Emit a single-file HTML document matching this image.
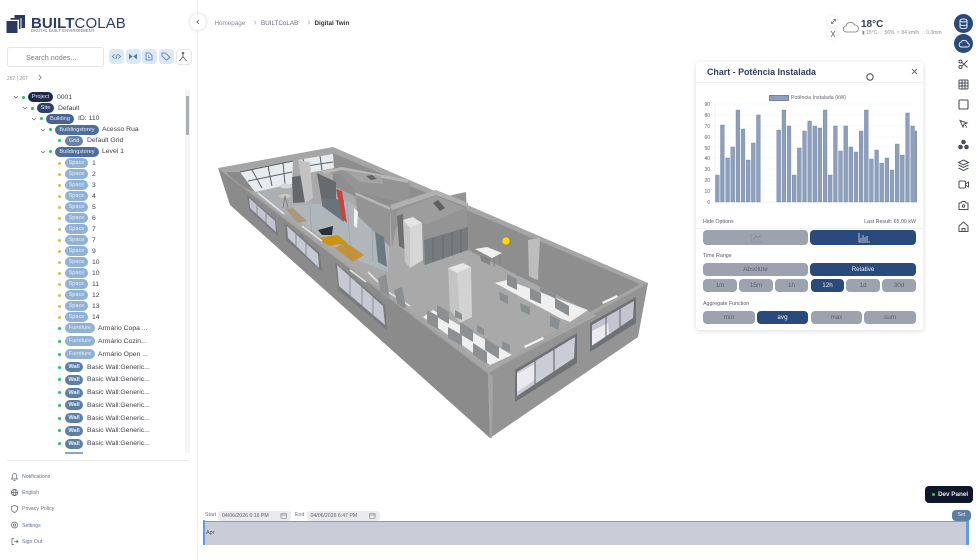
<!DOCTYPE html>
<html><head><meta charset="utf-8"><style>
html,body{margin:0;padding:0;background:#fff}
#p{position:relative;width:980px;height:560px;overflow:hidden;background:#fff;font-family:"Liberation Sans",sans-serif;color:#333;filter:blur(.35px)}
#p div,#p span.a{position:absolute;white-space:nowrap}
.r{height:10px;left:0;width:190px}
.d{width:3px;height:3px;border-radius:50%;left:58px;top:3.5px;background:#22c55e}
.y{background:#eab84a}
.b{height:10px;line-height:10px;border-radius:5px;color:#e8eef6;font-size:5.6px;text-align:center;top:0}
.t{font-size:6.8px;line-height:10px;top:.8px;color:#3c3f45}
.sp{left:65px;width:23px;background:#8fb2d6}
.w{left:65px;width:18px;background:#5c7fa8;font-weight:bold}
.f{left:65px;width:30px;background:#8fb2d6}
.btn{border-radius:4px;background:#9ca3af;color:#5b626e;font-size:6.3px;text-align:center}
.on{background:#2a4a7c;color:#e9eef6}
.lbl{font-size:5.3px;color:#555b66}
.yl{left:698px;width:12px;text-align:right;font-size:5px;color:#666;line-height:6px}
.ft{left:22px;font-size:5.2px;color:#66708a}
</style></head><body><div id="p">

<svg style="position:absolute;left:0;top:0" width="980" height="560" viewBox="0 0 980 560">
<!-- logo -->
<g fill="#2a3a63"><rect x="6.500" y="21" width="11" height="12"/><path d="M10.500 18h10v11h-1.500V19.800h-8.500z"/><path d="M14.500 15H25v13h-3.500V18h-7z"/></g>
<!-- building -->
<polygon points="218,168 488,373 490,438 230,205" fill="#8b8b8b"/>
<polygon points="488,373 648,283 638,337 490,438" fill="#949494"/>
<polygon points="488,373 493,376 492,438 490,438" fill="#a3a3a3"/>
<polygon points="218,168 333,147 648,283 488,373" fill="#a5a5a5"/>
<polygon points="226,172 333,153 640,284 488,368" fill="#a9a9a9"/>
<polygon points="333,153 640,284 590,312 468,250 410,222 333,186" fill="#8e8e8e"/>
<polygon points="226,172 240,172 255,192 240,186" fill="#8a8a8a"/>
<!-- back windows -->
<polygon points="240,172 293,161 292,184 255,192" fill="#e6ebef"/>
<polygon points="298,160 333,154 334,168 303,174" fill="#e6ebef"/>
<g stroke="#5a6064" stroke-width="1" fill="none"><path d="M240,172L293,161M248,181L292,172M252,170L262,188M268,166L272,186M283,163L285,184M303,159L306,173M320,156L322,170M300,167L333,162"/></g>
<polygon points="255,192 292,184 318,208 300,220 280,212" fill="#adb0b2"/>
<!-- column and cabinet -->
<polygon points="292,177 305,175 307,202 293,203" fill="#64686c"/>
<polygon points="298,160 310,162 313,198 305,203" fill="#c2c2c2"/>
<ellipse cx="285" cy="196" rx="6" ry="2" fill="#cbc9bd"/><path d="M285 196l-2 12M285 196l3 12" stroke="#777" stroke-width=".8"/>
<ellipse cx="286" cy="186" rx="6" ry="2.500" fill="#d5d8d8"/>
<!-- small upper room -->
<polygon points="322,171 342,167 409,180 410,204 357,192 342,176" fill="#949494"/>
<polygon points="322,171 342,167 409,180 408,183 342,170 324,174" fill="#b8b8b8"/>
<polygon points="345,170 380,176 384,184 360,182" fill="#a3a3a3"/>
<polygon points="366,176 372,175 377,179 371,180" fill="#606366"/>
<!-- dark panel, glass, red -->
<polygon points="293,207 347,200 390,230 388,272 352,258 300,222" fill="#afb7bb"/>
<polygon points="317,173 336,182 336,210 322,203" fill="#666b70"/>
<polygon points="322,198 344,200 344,222 322,206" fill="#69747a"/>
<polygon points="336,189 342,191 347,223 342,218" fill="#c8453f"/>
<polygon points="355,192 390,207 390,247 358,216" fill="#949494"/>
<polygon points="355,192 390,207 390,210 356,195" fill="#b5b5b5"/>
<polygon points="375,232 384,237 387,267 378,262" fill="#6b7a82"/>
<polygon points="354,208 358,212 357,228 354,226" fill="#f2f4f5"/>
<path d="M310 206L312 240M347 200L350 245M372 226L373 262" stroke="#969ea2" stroke-width=".6" fill="none"/>
<!-- right room boxes -->
<polygon points="390,207 436,190 448,196 466,192 468,250 424,265 410,228 403,220 396,228 392,248" fill="#949494"/>
<polygon points="390,205 436,190 468,203 468,207 436,195 392,210" fill="#b0b0b0"/>
<polygon points="396,212 436,196 465,208 428,224 402,222" fill="#9d9d9d"/>
<polygon points="433,203 438,200 445,208 440,211" fill="#5e6164"/>
<polygon points="397,216 403,214 406,250 399,246" fill="#707070"/>
<polygon points="424,240 468,227 468,250 425,265" fill="#777b7d"/>
<path d="M433 238v24M443 235v24M452 232v24M461 230v23" stroke="#606466" stroke-width=".7"/>
<!-- column 1 -->
<polygon points="403,220 410,228 410,268 405,262" fill="#c6c6c6"/>
<polygon points="410,228 422,223 423,260 410,268" fill="#d6d6d6"/>
<polygon points="403,220 413,217 422,223 410,228" fill="#e4e4e4"/>
<!-- orange tables and chair -->
<polygon points="285,209 293,208 307,221 298,223" fill="#a9987e"/>
<polygon points="318,238 338,235 347,243 328,246" fill="#cc9310"/>
<polygon points="335,248 345,242 364,255 353,262" fill="#c29238"/>
<polygon points="318,230 333,226 332,235 322,235" fill="#2b333a"/>
<polygon points="296,236 302,235 305,244 298,243" fill="#6a7a96"/>
<!-- left side desks -->
<path d="M258,193L284,214M302,226L322,241M350,270L366,282M368,272L378,282M385,290L410,306" stroke="#e4e4e4" stroke-width="1.600"/>
<polygon points="378,278 386,274 390,300 382,298" fill="#8d9193"/>
<polygon points="394,290 402,287 406,308 398,306" fill="#8a8e90"/>
<!-- back desk -->
<polygon points="475,249 487,247 502,253 492,258" fill="#f1f1f1"/>
<polygon points="480,255 490,259 490,265 481,261" fill="#858585"/>
<path d="M494 258v9M500 255v9" stroke="#808080" stroke-width="1"/>
<!-- column 2 / 3 -->
<polygon points="448,268 457,273 460,323 450,310" fill="#c4c4c4"/>
<polygon points="457,273 471,267 472,317 460,323" fill="#d2d2d2"/>
<polygon points="448,268 463,263 471,267 457,273" fill="#e6e6e6"/>
<polygon points="528,240 540,238 538,280 529,278" fill="#bdbdbd"/>
<!-- right desks -->
<polygon points="495,283 507,280 588,310 570,322 560,318" fill="#efefef"/>
<g fill="#8b8e90">
<polygon points="507,274 517,279 517,290 507,285"/><polygon points="530,288 541,293 541,304 530,299"/><polygon points="555,298 569,306 569,316 555,308"/>
<polygon points="516,270 535,279 535,283 516,275"/><polygon points="540,287 556,295 556,299 540,291"/>
<polygon points="499,292 508,296 508,304 500,300"/><polygon points="520,303 530,307 530,315 521,311"/><polygon points="550,315 560,320 558,330 550,326"/>
</g>
<!-- left desks -->
<polygon points="423,317 433,310 512,355 490,365" fill="#efefef"/>
<g fill="#8d9092">
<polygon points="427,310 438,316 438,329 427,323"/><polygon points="437,305 449,312 449,324 437,317"/>
<polygon points="448,327 462,335 462,346 448,338"/><polygon points="460,322 473,330 473,342 460,334"/>
<polygon points="473,343 487,352 487,364 473,355"/><polygon points="485,338 499,347 499,359 485,350"/>
<polygon points="455,310 462,314 462,320 455,317"/><polygon points="477,325 484,329 484,335 477,332"/><polygon points="502,341 510,345 510,352 502,349"/>
</g>
<polygon points="524,346 543,337 544,339 525,348" fill="#f3f3f3"/>
<polygon points="602,302 617,295 618,297 603,304" fill="#f3f3f3"/>
<polygon points="490,368 513,358 528,350 548,338 590,312 596,316 488,372" fill="#a8a8a8"/>
<!-- right face windows -->
<polygon points="515,370 577,333 577,363 515,402" fill="#6e7274"/>
<polygon points="517,372 575,337 574,358 517,396" fill="#ccccd8"/>
<polygon points="517,374 535,364 536,379 517,392" fill="#e9e9ee"/>
<path d="M535 361v23M554 349v23" stroke="#6e7274" stroke-width="1.200"/>
<polygon points="590,323 636,297 636,323 590,352" fill="#6e7274"/>
<polygon points="592,325 634,301 633,318 592,346" fill="#c4c4d0"/>
<polygon points="592,331 608,323 609,334 592,345" fill="#ececf0"/>
<path d="M606 316v21M620 309v20" stroke="#6e7274" stroke-width="1.100"/>
<!-- left face windows -->
<polygon points="247,195 276,220 278,236 249,210" fill="#787b7d"/>
<polygon points="249,198 275,221 276,232 250,208" fill="#c2c4d0"/>
<polygon points="285,223 320,253 322,272 286,240" fill="#787b7d"/>
<polygon points="287,226 318,254 319,268 288,238" fill="#c6c8d4"/>
<polygon points="335,262 385,305 387,330 338,290" fill="#787b7d"/>
<polygon points="337,265 383,306 385,325 339,286" fill="#c6c8d4"/>
<path d="M257 204v14M266 212v14M296 234v16M306 243v16M350 276v22M362 287v22M373 297v22" stroke="#808386" stroke-width=".8"/>
<path d="M218,168L488,373L648,283" fill="none" stroke="#a0a0a0" stroke-width="1"/>
<circle cx="506" cy="241" r="4" fill="#ffd514" stroke="#b78a10" stroke-width=".7"/>
<!-- search -->
<circle cx="15.500" cy="56.500" r="2.400" fill="none" stroke="#9aa0a8" stroke-width=".7"/><path d="M17.300 58.300l1.700 1.700" stroke="#9aa0a8" stroke-width=".7"/>
<!-- tree carets -->
<g fill="none" stroke="#667" stroke-width=".7">
<path d="M14 96l2 2 2-2M23 107l2 2 2-2M32 118l2 2 2-2M41 129l2 2 2-2M41 151l2 2 2-2"/>
<path d="M39 75l2 2.500-2 2.500"/>
</g>
</svg>

<!-- sidebar chrome -->
<div style="left:197px;top:0;width:1px;height:560px;background:#eef0f2"></div>
<div style="left:190px;top:14px;width:16px;height:16px;border-radius:50%;background:#fff;box-shadow:0 0 4px rgba(0,0,0,.18)"></div>
<svg style="position:absolute;left:190px;top:14px" width="16" height="16"><path d="M9 6l-2.200 2 2.200 2" fill="none" stroke="#555" stroke-width=".8"/></svg>

<div style="left:31px;top:15px;font-size:15px;font-weight:bold;line-height:17px;color:#2d3c63;letter-spacing:.1px">BUILT<span style="font-weight:normal">COLAB</span></div>
<div style="left:31px;top:28px;font-size:4.200px;line-height:6px;color:#667;letter-spacing:.12px">DIGITAL BUILT ENVIRONMENT</div>

<div style="left:7px;top:47px;width:95px;height:18px;border:1px solid #e3e5e8;border-radius:3px;background:#fff"></div>
<div style="left:26px;top:52.800px;font-size:7.200px;line-height:9px;color:#777d87">Search nodes...</div>
<div style="left:109px;top:49px;width:15px;height:15px;border-radius:4px;background:#dbe8f8"></div>
<div style="left:126px;top:49px;width:15px;height:15px;border-radius:4px;background:#dbe8f8"></div>
<div style="left:142px;top:49px;width:15px;height:15px;border-radius:4px;background:#dbe8f8"></div>
<div style="left:159px;top:49px;width:15px;height:15px;border-radius:4px;background:#dbe8f8"></div>
<div style="left:176px;top:49px;width:14px;height:14px;border-radius:4px;background:#fff;border:1px solid #e4e6ea"></div>
<svg style="position:absolute;left:109px;top:49px" width="82" height="15" fill="none" stroke="#4f76a8" stroke-width=".8">
<path d="M5.500 5.500L3.500 7.500l2 2M9.500 5.500l2 2-2 2M8.300 5l-1.200 5"/>
<path d="M20.500 5.500v4l2.500-2zM27.500 5.500v4l-2.500-2z" fill="#4f76a8"/>
<path d="M37 4h3.500L43 6.500V11h-6zM39 8.500h2M39 7h1"/>
<path d="M52 5h3.500L60 9.500 56.500 12 52 8z" transform="translate(1 -1)"/>
<path d="M74 4.500v3M74 7.500l-3 4M74 7.500l3 4M71 11.500h-1M77 11.500h1" stroke="#555"/><circle cx="74" cy="4" r=".9" stroke="#555"/>
</svg>
<div style="left:7px;top:75.500px;font-size:5px;line-height:6px;color:#8a8f98">267 | 267</div>

<!-- tree -->
<div class="r" style="top:92px"><div class="d" style="left:22px"></div><div class="b" style="left:28px;width:25px;background:#1f2a4b">Project</div><div class="t" style="left:57px">0001</div></div>
<div class="r" style="top:103px"><div class="d" style="left:31px"></div><div class="b" style="left:37px;width:17px;background:#2c4170">Site</div><div class="t" style="left:58px">Default</div></div>
<div class="r" style="top:113.500px"><div class="d" style="left:40px"></div><div class="b" style="left:46px;width:28px;background:#47648f">Building</div><div class="t" style="left:78px">ID: 110</div></div>
<div class="r" style="top:124.500px"><div class="d" style="left:49px"></div><div class="b" style="left:55px;width:44px;background:#4f6e9b">Buildingstorey</div><div class="t" style="left:102px">Acesso Rua</div></div>
<div class="r" style="top:135.500px"><div class="d"></div><div class="b" style="left:65px;width:18px;background:#6783a8">Grid</div><div class="t" style="left:87px">Default Grid</div></div>
<div class="r" style="top:146.500px"><div class="d" style="left:49px"></div><div class="b" style="left:55px;width:44px;background:#4f6e9b">Buildingstorey</div><div class="t" style="left:102px">Level 1</div></div>
<div class="r" style="top:158px"><div class="d y"></div><div class="b sp">Space</div><div class="t" style="left:92px">1</div></div>
<div class="r" style="top:169px"><div class="d y"></div><div class="b sp">Space</div><div class="t" style="left:92px">2</div></div>
<div class="r" style="top:180px"><div class="d y"></div><div class="b sp">Space</div><div class="t" style="left:92px">3</div></div>
<div class="r" style="top:191px"><div class="d y"></div><div class="b sp">Space</div><div class="t" style="left:92px">4</div></div>
<div class="r" style="top:202px"><div class="d y"></div><div class="b sp">Space</div><div class="t" style="left:92px">5</div></div>
<div class="r" style="top:213px"><div class="d y"></div><div class="b sp">Space</div><div class="t" style="left:92px">6</div></div>
<div class="r" style="top:224px"><div class="d y"></div><div class="b sp">Space</div><div class="t" style="left:92px">7</div></div>
<div class="r" style="top:235px"><div class="d y"></div><div class="b sp">Space</div><div class="t" style="left:92px">7</div></div>
<div class="r" style="top:246px"><div class="d y"></div><div class="b sp">Space</div><div class="t" style="left:92px">9</div></div>
<div class="r" style="top:257px"><div class="d y"></div><div class="b sp">Space</div><div class="t" style="left:92px">10</div></div>
<div class="r" style="top:268px"><div class="d y"></div><div class="b sp">Space</div><div class="t" style="left:92px">10</div></div>
<div class="r" style="top:279px"><div class="d y"></div><div class="b sp">Space</div><div class="t" style="left:92px">11</div></div>
<div class="r" style="top:290px"><div class="d y"></div><div class="b sp">Space</div><div class="t" style="left:92px">12</div></div>
<div class="r" style="top:301px"><div class="d y"></div><div class="b sp">Space</div><div class="t" style="left:92px">13</div></div>
<div class="r" style="top:312px"><div class="d y"></div><div class="b sp">Space</div><div class="t" style="left:92px">14</div></div>
<div class="r" style="top:323px"><div class="d"></div><div class="b f">Furniture</div><div class="t" style="left:98px">Armário Copa ...</div></div>
<div class="r" style="top:336px"><div class="d"></div><div class="b f">Furniture</div><div class="t" style="left:98px">Armário Cozin...</div></div>
<div class="r" style="top:349px"><div class="d"></div><div class="b f">Furniture</div><div class="t" style="left:98px">Armário Open ...</div></div>
<div class="r" style="top:362px"><div class="d"></div><div class="b w">Wall</div><div class="t" style="left:87px">Basic Wall:Generic...</div></div>
<div class="r" style="top:374.500px"><div class="d"></div><div class="b w">Wall</div><div class="t" style="left:87px">Basic Wall:Generic...</div></div>
<div class="r" style="top:387.500px"><div class="d"></div><div class="b w">Wall</div><div class="t" style="left:87px">Basic Wall:Generic...</div></div>
<div class="r" style="top:400px"><div class="d"></div><div class="b w">Wall</div><div class="t" style="left:87px">Basic Wall:Generic...</div></div>
<div class="r" style="top:413px"><div class="d"></div><div class="b w">Wall</div><div class="t" style="left:87px">Basic Wall:Generic...</div></div>
<div class="r" style="top:425.500px"><div class="d"></div><div class="b w">Wall</div><div class="t" style="left:87px">Basic Wall:Generic...</div></div>
<div class="r" style="top:438.500px"><div class="d"></div><div class="b w">Wall</div><div class="t" style="left:87px">Basic Wall:Generic...</div></div>
<div style="left:65px;top:452px;width:18px;height:1.500px;background:#8aa5c5"></div>

<div style="left:185px;top:90px;width:5px;height:363px;background:#f5f5f6"></div>
<div style="left:186px;top:96px;width:3px;height:39px;background:#a9aeb5"></div>

<div style="left:7px;top:460px;width:183px;height:1px;background:#e8e9eb"></div>
<div class="ft" style="top:473.800px;line-height:6px">Notifications</div>
<div class="ft" style="top:489.800px;line-height:6px">English</div>
<div class="ft" style="top:506.300px;line-height:6px">Privacy Policy</div>
<div class="ft" style="top:522.800px;line-height:6px">Settings</div>
<div class="ft" style="top:538.800px;line-height:6px">Sign Out</div>
<svg style="position:absolute;left:9px;top:471px" width="11" height="75" fill="none" stroke="#555e6e" stroke-width=".7">
<path d="M2.500 8c1-1 1-2 1-3.500a2 2 0 0 1 4 0C7.500 6 7.500 7 8.500 8zM4.500 9.500h2"/>
<circle cx="5.500" cy="21.500" r="3.200"/><path d="M2.300 21.500h6.400M5.500 18.300c-2 2-2 4.400 0 6.400 2-2 2-4.400 0-6.400"/>
<path d="M5.500 34.500l3 1v2.500c0 1.700-1.300 2.800-3 3.500-1.700-.7-3-1.800-3-3.500v-2.500z"/>
<circle cx="5.500" cy="54" r="1.200"/><circle cx="5.500" cy="54" r="3"/>
<path d="M5 67.500H3v6h2M5.500 70.500h3.500M7.500 69l1.500 1.500L7.500 72"/>
</svg>

<!-- breadcrumb -->
<div style="left:214.500px;top:19.800px;font-size:6.300px;line-height:8px;color:#858a94">Homepage</div>
<div style="left:261px;top:19.800px;font-size:6.300px;line-height:8px;color:#666b75">BUILTCoLAB</div>
<div style="left:314.500px;top:19.800px;font-size:6.300px;line-height:8px;color:#333;font-weight:bold">Digital Twin</div>
<svg style="position:absolute;left:250px;top:18px" width="70" height="10" fill="none" stroke="#aaa" stroke-width=".6"><path d="M4 2.500l2 2-2 2M58 2.500l2 2-2 2"/></svg>

<!-- weather -->
<div style="left:827px;top:16px;width:11px;height:11px;border-radius:50%;background:#fff;box-shadow:0 0 3px rgba(0,0,0,.12)"></div>
<div style="left:827px;top:28px;width:11px;height:11px;border-radius:50%;background:#fff;box-shadow:0 0 3px rgba(0,0,0,.12)"></div>
<svg style="position:absolute;left:825px;top:14px" width="40" height="26" fill="none" stroke="#666" stroke-width=".7">
<path d="M6.500 9.500l4-4M6.500 7.500v2h2M10.500 7.500v-2h-2"/>
<path d="M6 17l4 6M10 17l-4 6"/>
<path d="M21.500 18a3 3 0 0 1-.5-6 4.500 4.500 0 0 1 8.500-1 3.600 3.600 0 0 1 1.500 7z" stroke="#777" stroke-width=".8"/>
</svg>
<div style="left:861px;top:18.500px;font-size:10px;font-weight:bold;line-height:12px;color:#37405a">18°C</div>
<div style="left:862px;top:29.500px;font-size:5px;line-height:6px;color:#8a919c">▮ 15°C &nbsp;◌ 56% &nbsp;≈ 84 km/h &nbsp;◌ 0.0mm</div>

<!-- right toolbar -->
<div style="left:953.500px;top:13.500px;width:19px;height:19px;border-radius:50%;background:#2a4a7c"></div>
<div style="left:953.500px;top:34px;width:19px;height:19px;border-radius:50%;background:#2a4a7c"></div>
<svg style="position:absolute;left:950px;top:10px" width="28" height="230" fill="none" stroke="#4a4f58" stroke-width="1">
<g stroke="#e6ecf5"><ellipse cx="13.500" cy="10.500" rx="3.500" ry="1.500"/><path d="M10 10.500v6.500c0 2 7 2 7 0v-6.500M10 14c0 2 7 2 7 0"/>
<path d="M11 37h6a2 2 0 0 0 .5-4 3.500 3.500 0 0 0-6.500-.8A2.500 2.500 0 0 0 11 37z"/></g>
<circle cx="10.500" cy="51.500" r="1.500"/><circle cx="10.500" cy="57" r="1.500"/><path d="M12 52.500l5.500 5M12 56l5.500-5.500"/>
<rect x="9" y="70" width="9" height="9" rx="1"/><path d="M9 73h9M9 76h9M12 70v9M15 70v9"/>
<rect x="9" y="90" width="9" height="9" rx="1" stroke-width="1.100"/>
<path d="M10 110.500l7 2.500-3 1-1 3zM15 115l2 2.500"/>
<g fill="#4a4f58" stroke="none"><circle cx="13.500" cy="132" r="2.300"/><circle cx="10.500" cy="137" r="2.300"/><circle cx="16.500" cy="137" r="2.300"/></g>
<path d="M13.500 150l5 2.500-5 2.500-5-2.500zM8.500 155l5 2.500 5-2.500M8.500 158l5 2.500 5-2.500"/>
<rect x="9" y="171" width="6.500" height="7" rx="1"/><path d="M15.500 174l3-2v5l-3-2"/>
<path d="M9 193h2l1-1.500h3l1 1.500h2v6.500H9z"/><circle cx="13.500" cy="196" r="1.200"/>
<path d="M9 216l4.500-4 4.500 4v5.500H9zM12 221.500v-3h3v3"/>
</svg>

<!-- chart panel -->
<div style="left:696px;top:62px;width:227px;height:268px;background:#fff;border-radius:3px;box-shadow:0 1px 6px rgba(0,0,0,.14)"></div>
<div style="left:696px;top:82px;width:227px;height:1px;background:#eef0f2"></div>
<div style="left:707px;top:66px;font-size:8.900px;font-weight:bold;line-height:12px;color:#2f3d5e">Chart - Potência Instalada</div>
<svg style="position:absolute;left:696px;top:62px" width="227" height="268" fill="none">
<path d="M216 7l5 5M221 7l-5 5" stroke="#667" stroke-width=".9"/>
<circle cx="174" cy="15" r="3.200" stroke="#444" stroke-width="1"/>
<path d="M8 42H220M8 53H220M8 64H220M8 75H220M8 85H220M8 96H220M8 107H220M8 118H220M8 129H220" stroke="#f0f1f3" stroke-width=".5"/>
<path d="M19 42v98H220" stroke="#e6e7ea" stroke-width=".5"/>
</svg>
<svg style="position:absolute;left:715px;top:104px" width="202" height="99">
<g fill="#8e9fbc" stroke="#6f83a5" stroke-width=".4">
<rect x=".5" y="71" width="3.800" height="27"/><rect x="5.500" y="21" width="3.800" height="77"/><rect x="10.700" y="54" width="3.800" height="44"/><rect x="15.800" y="43" width="3.800" height="55"/><rect x="21" y="6" width="3.800" height="92"/><rect x="26.100" y="25" width="3.800" height="73"/><rect x="31.300" y="56" width="3.800" height="42"/><rect x="36.400" y="39" width="3.800" height="59"/><rect x="41.500" y="11" width="3.800" height="87"/>
<rect x="61.800" y="26" width="3.800" height="72"/><rect x="67" y="6" width="3.800" height="92"/><rect x="72.100" y="22" width="3.800" height="76"/><rect x="77.300" y="71" width="3.800" height="27"/><rect x="82.400" y="44" width="3.800" height="54"/><rect x="87.600" y="27" width="3.800" height="71"/><rect x="92.700" y="17" width="3.800" height="81"/><rect x="97.900" y="22" width="3.800" height="76"/><rect x="103" y="24" width="3.800" height="74"/><rect x="108.200" y="6" width="3.800" height="92"/><rect x="113.300" y="71" width="3.800" height="27"/><rect x="118.500" y="22" width="3.800" height="76"/><rect x="123.600" y="47" width="3.800" height="51"/><rect x="128.800" y="22" width="3.800" height="76"/><rect x="133.900" y="43" width="3.800" height="55"/><rect x="139.100" y="48" width="3.800" height="50"/><rect x="144.200" y="27" width="3.800" height="71"/><rect x="149.400" y="6" width="3.800" height="92"/><rect x="154.500" y="55" width="3.800" height="43"/><rect x="159.700" y="46" width="3.800" height="52"/><rect x="164.800" y="59" width="3.800" height="39"/><rect x="170" y="54" width="3.800" height="44"/><rect x="175.100" y="66" width="3.800" height="32"/><rect x="180.300" y="40" width="3.800" height="58"/><rect x="185.400" y="51" width="3.800" height="47"/><rect x="190.600" y="9" width="3.800" height="89"/><rect x="195.700" y="22" width="3.800" height="76"/><rect x="200" y="27" width="2" height="71"/>
</g></svg>
<div style="left:769px;top:95px;width:20px;height:6px;background:#8e9fbc;border:.5px solid #6f83a5;box-sizing:border-box"></div>
<div style="left:791px;top:95.200px;font-size:5.200px;line-height:7px;color:#666">Potência Instalada (kW)</div>
<div class="yl" style="top:102px">90</div><div class="yl" style="top:113px">80</div><div class="yl" style="top:124px">70</div><div class="yl" style="top:135px">60</div><div class="yl" style="top:146px">50</div><div class="yl" style="top:156px">40</div><div class="yl" style="top:167px">30</div><div class="yl" style="top:178px">20</div><div class="yl" style="top:189px">10</div><div class="yl" style="top:200px">0</div>

<div class="lbl" style="left:703px;top:218.800px;line-height:7px">Hide Options</div>
<div class="lbl" style="right:64px;top:218.800px;line-height:7px">Last Result: 65.00 kW</div>
<div style="left:696px;top:228px;width:227px;height:1px;background:#f0f1f3"></div>
<div class="btn" style="left:703px;top:230px;width:105px;height:15px"></div>
<div class="btn on" style="left:810px;top:230px;width:106px;height:15px"></div>
<svg style="position:absolute;left:750px;top:232px" width="125" height="11" fill="none"><path d="M1 1v9h11M3 7l3-3 2 2 3-3" stroke="#7d848f" stroke-width=".6"/><path d="M109 1v9h11M111 9V6M113 9V3M115 9V5M117 9V4" stroke="#dfe6f0" stroke-width=".8"/></svg>
<div class="lbl" style="left:703px;top:252.800px;line-height:7px">Time Range</div>
<div class="btn" style="left:703px;top:263px;width:105px;height:13px;line-height:13.800px">Absolute</div>
<div class="btn on" style="left:810px;top:263px;width:106px;height:13px;line-height:13.800px">Relative</div>
<div class="btn" style="left:703px;top:279px;width:34px;height:13px;line-height:13.800px">1m</div>
<div class="btn" style="left:739px;top:279px;width:34px;height:13px;line-height:13.800px">15m</div>
<div class="btn" style="left:775px;top:279px;width:33px;height:13px;line-height:13.800px">1h</div>
<div class="btn on" style="left:811px;top:279px;width:33px;height:13px;line-height:13.800px">12h</div>
<div class="btn" style="left:846px;top:279px;width:34px;height:13px;line-height:13.800px">1d</div>
<div class="btn" style="left:882px;top:279px;width:34px;height:13px;line-height:13.800px">30d</div>
<div class="lbl" style="left:703px;top:300.800px;line-height:7px">Aggregate Function</div>
<div class="btn" style="left:703px;top:311px;width:52px;height:13px;line-height:13.800px">min</div>
<div class="btn on" style="left:757px;top:311px;width:51px;height:13px;line-height:13.800px">avg</div>
<div class="btn" style="left:811px;top:311px;width:51px;height:13px;line-height:13.800px">max</div>
<div class="btn" style="left:864px;top:311px;width:52px;height:13px;line-height:13.800px">sum</div>

<!-- timeline -->
<div style="left:205px;top:512px;font-size:5.300px;line-height:7px;color:#6a707a">Start</div>
<div style="left:218px;top:510.500px;width:73px;height:10.500px;background:#e9ebef;border-radius:3px"></div>
<div style="left:222px;top:512.500px;font-size:5.200px;line-height:7px;color:#5f6570">04/06/2026 6:16 PM</div>
<div style="left:295px;top:512px;font-size:5.300px;line-height:7px;color:#6a707a">End</div>
<div style="left:307px;top:510.500px;width:73px;height:10.500px;background:#e9ebef;border-radius:3px"></div>
<div style="left:310.500px;top:512.500px;font-size:5.200px;line-height:7px;color:#5f6570">04/06/2026 6:47 PM</div>
<svg style="position:absolute;left:280px;top:512px" width="98" height="8" fill="none" stroke="#777" stroke-width=".6"><rect x="1" y="1.500" width="5.500" height="5" rx=".6"/><path d="M1 3h5.500"/><rect x="89.500" y="1.500" width="5.500" height="5" rx=".6"/><path d="M89.500 3h5.500"/></svg>
<div style="left:203px;top:521px;width:765px;height:24px;background:#c8ccd6;border-top:1px solid #8f9bb1;box-sizing:border-box"></div>
<div style="left:203px;top:520px;width:2px;height:25px;background:#5f9ce6"></div>
<div style="left:966px;top:520px;width:2.500px;height:25px;background:#5f9ce6"></div>
<div style="left:206px;top:530px;font-size:5.500px;line-height:7px;color:#444b5a">Apr</div>
<div style="left:952px;top:510px;width:19px;height:11px;border-radius:4px;background:#5b7fa0;color:#e8eef4;font-size:5.300px;line-height:11px;text-align:center">Set</div>
<div style="left:925px;top:486px;width:48px;height:17px;border-radius:4px;background:#0f1628"></div>
<div style="left:932px;top:493px;width:3px;height:3px;border-radius:50%;background:#22c55e"></div>
<div style="left:938px;top:490.500px;font-size:6.300px;font-weight:bold;line-height:8px;color:#e8eaef">Dev Panel</div>
</div></body></html>
